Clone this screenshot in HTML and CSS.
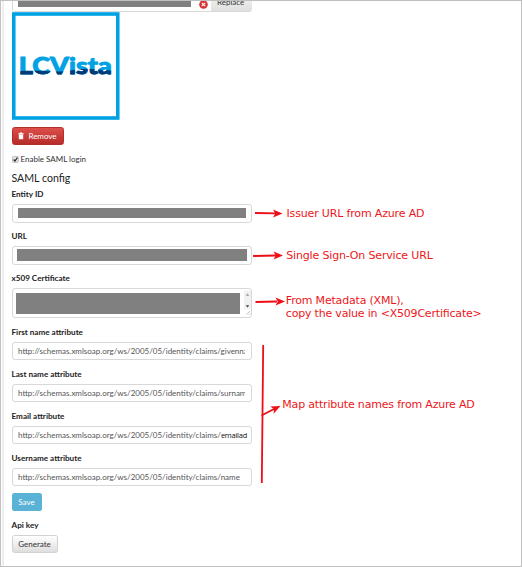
FILE: index.html
```html
<!DOCTYPE html>
<html lang="en">
<head>
<meta charset="utf-8">
<title>SAML config</title>
<link rel="stylesheet" href="styles.css">
</head>
<body>
<main class="frame">
  <form class="settings">
    <div class="upload">
      <div class="upload-name"><span class="redacted"></span>
        <svg class="clear" viewBox="0 0 9 9"><circle cx="4.5" cy="4.5" r="4.3" fill="#d93036"/><path d="M2.8 2.8l3.4 3.4M6.2 2.8L2.8 6.2" stroke="#fff" stroke-width="1.2"/></svg>
      </div>
      <div class="upload-replace">Replace</div>
    </div>
    <svg class="logo" viewBox="0 0 108 108" role="img" aria-label="LCVista">
      <defs>
        <clipPath id="wave"><path d="M0 61Q8 58 20 58.500T42 59.500T62 58T80 57T108 59V80H0Z"/></clipPath>
      </defs>
      <rect x="1.75" y="2" width="104" height="104" fill="#fff" stroke="#00a2e4" stroke-width="3.6"/>
      <g class="logo-text">
        <text x="6.800" y="62.3" textLength="93" lengthAdjust="spacingAndGlyphs" fill="#00a2e4" stroke="#00a2e4">LCVista</text>
        <text x="6.800" y="62.3" textLength="93" lengthAdjust="spacingAndGlyphs" fill="#003b78" stroke="#003b78" clip-path="url(#wave)">LCVista</text>
      </g>
    </svg>
    <div class="button danger">
      <svg class="trash" viewBox="0 0 6 8"><path d="M.3 1.2h1.6V.4h2.2v.8h1.6v1H.3zM.8 2.6h4.4v4.6H.8z" fill="#fff"/></svg>
      <span>Remove</span>
    </div>
    <div class="check-row">
      <svg class="check" viewBox="0 0 7 7"><rect x=".4" y=".4" width="6" height="6" rx="1" fill="#e5e5e5" stroke="#aaa" stroke-width=".7"/><path d="M1.6 3.5l1.4 1.6L5.4 1.5" fill="none" stroke="#222" stroke-width="1.2"/></svg>
      <span>Enable SAML login</span>
    </div>
    <h2>SAML config</h2>
    <label class="label first">Entity ID</label>
    <div class="field"><span class="redacted entity"></span></div>
    <label class="label">URL</label>
    <div class="field"><span class="redacted url"></span></div>
    <label class="label">x509 Certificate</label>
    <div class="field area">
      <span class="redacted cert"></span>
      <svg class="scroll" viewBox="0 0 8 29"><path d="M0 0h8v21H0z" fill="#f1f1f1"/><path d="M2 5.5L4 3l2 2.5z" fill="#999"/><path d="M2 16.5L4 19l2-2.5z" fill="#444"/><path d="M3 27l4-4M5.5 27.3L7.3 25.5" stroke="#999" stroke-width=".7"/></svg>
    </div>
    <label class="label">First name attribute</label>
    <div class="field"><span class="value">http://schemas.xmlsoap.org/ws/2005/05/identity/claims/givenna</span></div>
    <label class="label">Last name attribute</label>
    <div class="field"><span class="value">http://schemas.xmlsoap.org/ws/2005/05/identity/claims/surnam</span></div>
    <label class="label">Email attribute</label>
    <div class="field"><span class="value wide">http://schemas.xmlsoap.org/ws/2005/05/identity/claims/<span class="typed">emailad</span></span></div>
    <label class="label">Username attribute</label>
    <div class="field"><span class="value">http://schemas.xmlsoap.org/ws/2005/05/identity/claims/name</span></div>
    <div class="button info">Save</div>
    <label class="label api">Api key</label>
    <div class="button plain">Generate</div>
  </form>
  <svg class="notes" viewBox="0 0 522 567">
    <defs><path id="head" d="M0 0L-9.5-4L-7.2 0L-9.5 4Z"/></defs>
    <g class="lines">
      <path d="M255 213L276 213.4M253 256L276 255.5M255.500 302L277 301.500"/>
      <path d="M263.200 345L261.800 483"/>
      <path d="M261.500 415.500L274 409"/>
    </g>
    <g class="heads">
      <use href="#head" transform="translate(282.500 213.500)"/>
      <use href="#head" transform="translate(283 255.500)"/>
      <use href="#head" transform="translate(285 301.500)"/>
      <use href="#head" transform="translate(280.500 406) rotate(-25)"/>
    </g>
    <g class="note-text">
      <text x="286.500" y="217" textLength="138">Issuer URL from Azure AD</text>
      <text x="286.300" y="259.300" textLength="146.500">Single Sign-On Service URL</text>
      <text x="285.800" y="304.300" textLength="118">From Metadata (XML),</text>
      <text x="285.800" y="317" textLength="196">copy the value in &lt;X509Certificate&gt;</text>
      <text x="282.300" y="407.500" textLength="192.500">Map attribute names from Azure AD</text>
    </g>
  </svg>
</main>
</body>
</html>
```
FILE: styles.css
```css
* { box-sizing: border-box; }
body { margin: 0; background: #fff; font: 8px/12px Lato, sans-serif; color: #333; }
.frame { position: relative; width: 522px; height: 567px; border: 1px solid #c0c0c0; overflow: hidden; }
.settings { height: 565px; margin-left: 1px; padding-left: 7.500px; border-left: 2px solid #efedee; display: flex; flex-direction: column; align-items: flex-start; }
.upload { display: flex; width: 240.500px; height: 10.500px; flex: none; overflow: hidden; border-bottom: 1px solid #d9d9d9; border-radius: 0 0 3px 3px; }
.upload-name { display: flex; width: 199.500px; padding-left: 5.500px; border-left: 1px solid #d9d9d9; }
.upload-name .redacted { width: 173px; height: 6px; }
.clear { width: 9px; height: 9px; margin: -1px 0 0 8px; }
.upload-replace { flex: 1; padding-left: 6px; line-height: 12px; margin-top: -5px; background: linear-gradient(#f2f2f2, #dedede); height: 16px; }
.redacted { display: block; background: #808080; flex: none; }
.logo { width: 108px; height: 108px; margin: 0; flex: none; }
.logo-text { font: 900 23.500px Lato, sans-serif; stroke-width: .9; }
.button { display: flex; align-items: center; justify-content: center; height: 18px; border-radius: 2.500px; flex: none; }
.danger { width: 52px; margin-top: 7.500px; gap: 4px; color: #fff; background: linear-gradient(#dc4f4a, #b72b28); border: 1px solid #b52d29; }
.trash { width: 6px; height: 8px; }
.check-row { display: flex; align-items: center; gap: 2px; height: 12px; margin-top: 8px; }
.check { width: 7px; height: 7px; }
h2 { margin: 6px 0 0; font-size: 10.600px; font-weight: 400; line-height: 14px; color: #222; }
.label { height: 12px; margin-top: 13.200px; margin-bottom: 4px; flex: none; font-weight: 700; font-size: 8.150px; line-height: 12px; color: #222; }
.first { margin-top: 3px; margin-bottom: 4px; }
.field { display: flex; align-items: center; width: 240.500px; height: 18.500px; margin-bottom: -5.500px; margin-top: 0; padding-left: 5.500px; border: 1px solid #d8d8d8; border-radius: 3px; overflow: hidden; flex: none; }
.field + .label { margin-top: 13px; }
.entity { width: 228px; height: 10px; }
.url { width: 230px; height: 12px; margin-left: -1px; }
.area { height: 30px; position: relative; }
.cert { width: 224px; height: 21px; margin-left: -2px; }
.scroll { width: 8px; height: 29px; margin-left: 4px; }
.value { width: 227px; overflow: hidden; white-space: nowrap; color: #555; font-size: 8px; }
.wide { width: 233px; }
.typed { color: #111; font-family: "Open Sans", sans-serif; font-size: 7.500px; letter-spacing: -.25px; }
.info { width: 30px; margin-top: 12.500px; color: #fff; background: #5ab2d6; }
.api { margin-top: 8px; }
.plain { width: 46px; border: 1px solid #d2d2d2; background: linear-gradient(#fff, #dedede); }
.notes { position: absolute; left: -1px; top: -1px; width: 522px; height: 567px; }
.lines { stroke: #ed0e17; stroke-width: 1.800; fill: none; }
.heads { fill: #ed0e17; }
.note-text { fill: #ed1620; font: 11px "DejaVu Sans", sans-serif; }
```
